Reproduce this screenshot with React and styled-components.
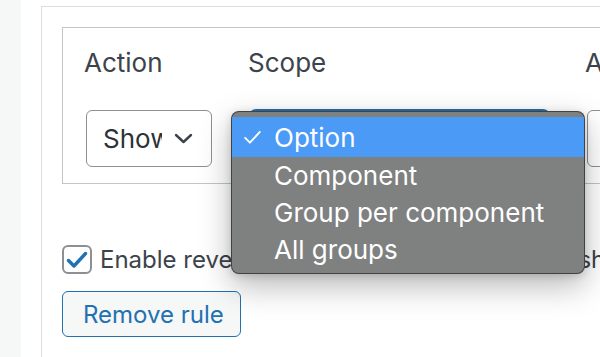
import * as React from "react";
import styled, { createGlobalStyle } from "styled-components";

const scopeOptions = ["Option", "Component", "Group per component", "All groups"];

const GlobalStyle = createGlobalStyle`
  html, body {
    margin: 0;
    padding: 0;
    background: #fff;
  }
  body {
    font-family: Inter, "Open Sans", sans-serif;
    overflow: hidden;
  }
`;

function Chevron() {
  return (
    <svg width="19" height="11" viewBox="0 0 19 11" fill="none">
      <path
        d="M2 2l7.5 7 7.5-7"
        stroke="#3c434a"
        strokeWidth="2.4"
        strokeLinecap="round"
        strokeLinejoin="round"
      />
    </svg>
  );
}

function CheckMark({ color = "#2271b1", width = 22, height = 18, stroke = 3.4 }) {
  return (
    <svg width={width} height={height} viewBox="0 0 22 18" fill="none">
      <path
        d="M2.5 9.5l5.5 5.5L19.5 2.5"
        stroke={color}
        strokeWidth={stroke}
        strokeLinecap="round"
        strokeLinejoin="round"
      />
    </svg>
  );
}

function App() {
  return (
    <Page>
      <GlobalStyle />
      <Sidebar />
      <Main>
        <Card>
          <RuleBox>
            <Column>
              <Label>Action</Label>
              <Select $width={126}>
                <SelectText>Show</SelectText>
                <Chevron />
              </Select>
            </Column>
            <Column>
              <Label>Scope</Label>
              <Select $width={299} $focused />
              <Menu>
                {scopeOptions.map((opt, i) => (
                  <MenuItem key={opt} $active={i === 0}>
                    <Tick>
                      {i === 0 && (
                        <CheckMark color="#fff" width={19} height={19} stroke={2.2} />
                      )}
                    </Tick>
                    {opt}
                  </MenuItem>
                ))}
              </Menu>
            </Column>
            <Column>
              <Label>Apply to</Label>
              <Select $width={200} />
            </Column>
          </RuleBox>

          <CheckRow>
            <Checkbox>
              <CheckMark />
            </Checkbox>
            <CheckLabel>Enable reverse logic (i.e., hide rather than show)</CheckLabel>
          </CheckRow>

          <RemoveButton>Remove rule</RemoveButton>
        </Card>
      </Main>
    </Page>
  );
}

const Page = styled.div`
  display: flex;
  width: 600px;
  height: 357px;
  overflow: hidden;
`;

const Sidebar = styled.div`
  width: 21px;
  flex-shrink: 0;
  background: #f6f7f7;
`;

const Main = styled.div`
  flex: 1;
  padding: 6px 0 0 20px;
  background: #fff;
`;

const Card = styled.div`
  width: 760px;
  height: 100%;
  box-sizing: border-box;
  border-left: 1px solid #dcdcde;
  border-top: 1px solid #dcdcde;
  padding: 20px;
  display: flex;
  flex-direction: column;
  align-items: flex-start;
`;

const RuleBox = styled.div`
  align-self: stretch;
  display: flex;
  gap: 38px;
  border: 1px solid #c3c4c7;
  padding: 19px 20px 16px 23px;
`;

const Column = styled.div`
  position: relative;
  display: flex;
  flex-direction: column;
  flex-shrink: 0;
`;

const Label = styled.div`
  font-size: 26px;
  line-height: 31px;
  color: #3c434a;
  margin-left: -2px;
  margin-bottom: 32px;
`;

const Select = styled.div`
  box-sizing: border-box;
  width: ${(p) => p.$width}px;
  height: 57px;
  display: flex;
  align-items: center;
  padding: 0 18px 0 16px;
  gap: 12px;
  border: 1px solid ${(p) => (p.$focused ? "#2271b1" : "#8c8f94")};
  box-shadow: ${(p) => (p.$focused ? "0 0 0 1px #2271b1" : "none")};
  background: #fff;
  border-radius: 6px;
`;

const SelectText = styled.span`
  flex: 1;
  overflow: hidden;
  white-space: nowrap;
  font-size: 26px;
  color: #2c3338;
`;

const Menu = styled.div`
  position: absolute;
  top: 64px;
  left: -19px;
  width: 354px;
  box-sizing: border-box;
  padding: 5px 0;
  background: #7f8080;
  border: 1px solid rgba(40, 40, 40, 0.7);
  border-radius: 8px;
  box-shadow: 0 12px 32px rgba(0, 0, 0, 0.28), 0 2px 8px rgba(0, 0, 0, 0.15);
  z-index: 10;
`;

const MenuItem = styled.div`
  display: flex;
  align-items: center;
  height: ${(p) => (p.$active ? 40 : 37)}px;
  padding-left: 11px;
  font-size: 26px;
  color: #fff;
  background: ${(p) => (p.$active ? "#4a9af6" : "transparent")};
`;

const Tick = styled.span`
  width: 31px;
  display: flex;
  align-items: center;
`;

const CheckRow = styled.label`
  display: flex;
  align-items: center;
  gap: 8px;
  margin-top: 61px;
  white-space: nowrap;
`;

const Checkbox = styled.span`
  box-sizing: border-box;
  width: 30px;
  height: 29px;
  display: flex;
  align-items: center;
  justify-content: center;
  border: 2px solid #8c8f94;
  border-radius: 6px;
  background: #fff;
`;

const CheckLabel = styled.span`
  font-size: 24px;
  color: #3c434a;
`;

const RemoveButton = styled.button`
  margin-top: 17px;
  box-sizing: border-box;
  width: 179px;
  height: 56px;
  padding: 0 20px;
  border: 1px solid #2271b1;
  border-radius: 6px;
  background: #f6f7f7;
  color: #2271b1;
  font: 400 24px Inter, "Open Sans", sans-serif;
  white-space: nowrap;
`;

export default App;
